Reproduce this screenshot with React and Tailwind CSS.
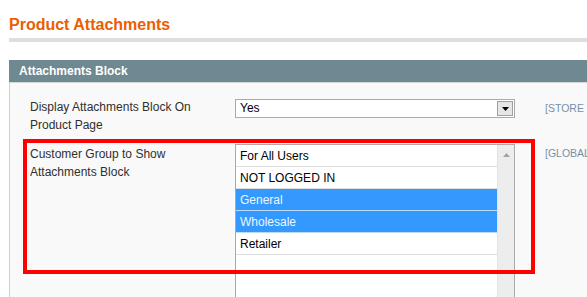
import React from 'react';

const options = [
  { label: 'For All Users', selected: false },
  { label: 'NOT LOGGED IN', selected: false },
  { label: 'General', selected: true },
  { label: 'Wholesale', selected: true },
  { label: 'Retailer', selected: false },
];

const App = () => {
  return (
    <div className="relative w-[587px] h-[297px] overflow-hidden bg-white font-['Liberation_Sans',Arial,sans-serif]">
      <div className="pl-[9px] pt-[15px] w-[700px]">
        {/* Page title */}
        <h1 className="text-[16px] leading-[20px] font-bold text-[#eb5e00]">Product Attachments</h1>
        <div className="mt-[3px] h-[4px] bg-[#dedede]"></div>

        {/* Fieldset */}
        <div className="mt-[18px]">
          <div className="h-[22px] pl-[10px] bg-[#6f8992] text-white text-[12px] leading-[22px] font-bold">
            Attachments Block
          </div>
          <div className="h-px bg-[#d6d6d6]"></div>
          <div className="h-[300px] bg-[#f9f9f9] border-l border-[#cfcfcf] pl-[20px] pt-[15px]">
            {/* Row 1 */}
            <div className="flex">
              <div className="w-[205px] text-[12px] leading-[18px] text-[#2f2f2f]">
                Display Attachments Block On<br />Product Page
              </div>
              <div className="mt-px w-[280px] h-[19px] flex items-center bg-white border border-[#aaaaaa]">
                <span className="flex-1 pl-[4px] text-[12px] leading-[17px] text-black">Yes</span>
                <div className="mr-px w-[16px] h-[15px] flex items-center justify-center bg-[#e6e6e6] border border-[#a0a0a0]">
                  <svg width="7" height="4" viewBox="0 0 7 4"><path d="M0 0h7L3.5 4z" fill="#000" /></svg>
                </div>
              </div>
              <div className="ml-[30px] mt-[1px] text-[10.5px] leading-[18px] text-[#7590a8]">[STORE VIEW]</div>
            </div>

            {/* Row 2 */}
            <div className="flex mt-[10px]">
              <div className="mt-px w-[205px] text-[12px] leading-[18px] text-[#2f2f2f]">
                Customer Group to Show<br />Attachments Block
              </div>
              <div className="w-[280px] h-[170px] flex bg-white border border-[#aaaaaa]">
                <div className="flex-1">
                  {options.map((o) => (
                    <div
                      key={o.label}
                      className={`h-[22px] pl-[4px] text-[12px] leading-[22px] border-b ${
                        o.selected ? 'bg-[#3399ff] text-[#eef6ff] border-[#bcdcff]' : 'text-black border-[#dedede]'
                      }`}
                    >
                      {o.label}
                    </div>
                  ))}
                </div>
                <div className="w-[17px] bg-[#ededed] border-l border-[#e2e2e2] flex justify-center pt-[8px]">
                  <svg width="7" height="4" viewBox="0 0 7 4"><path d="M3.5 0L7 4H0z" fill="#a3a3a3" /></svg>
                </div>
              </div>
              <div className="ml-[30px] text-[10.5px] leading-[18px] text-[#7590a8]">[GLOBAL]</div>
            </div>
          </div>
        </div>
      </div>

      {/* Highlight annotation */}
      <div className="absolute left-[23px] top-[139px] w-[512px] h-[135px] border-4 border-[#ff0000]"></div>
    </div>
  );
};

export default App;
